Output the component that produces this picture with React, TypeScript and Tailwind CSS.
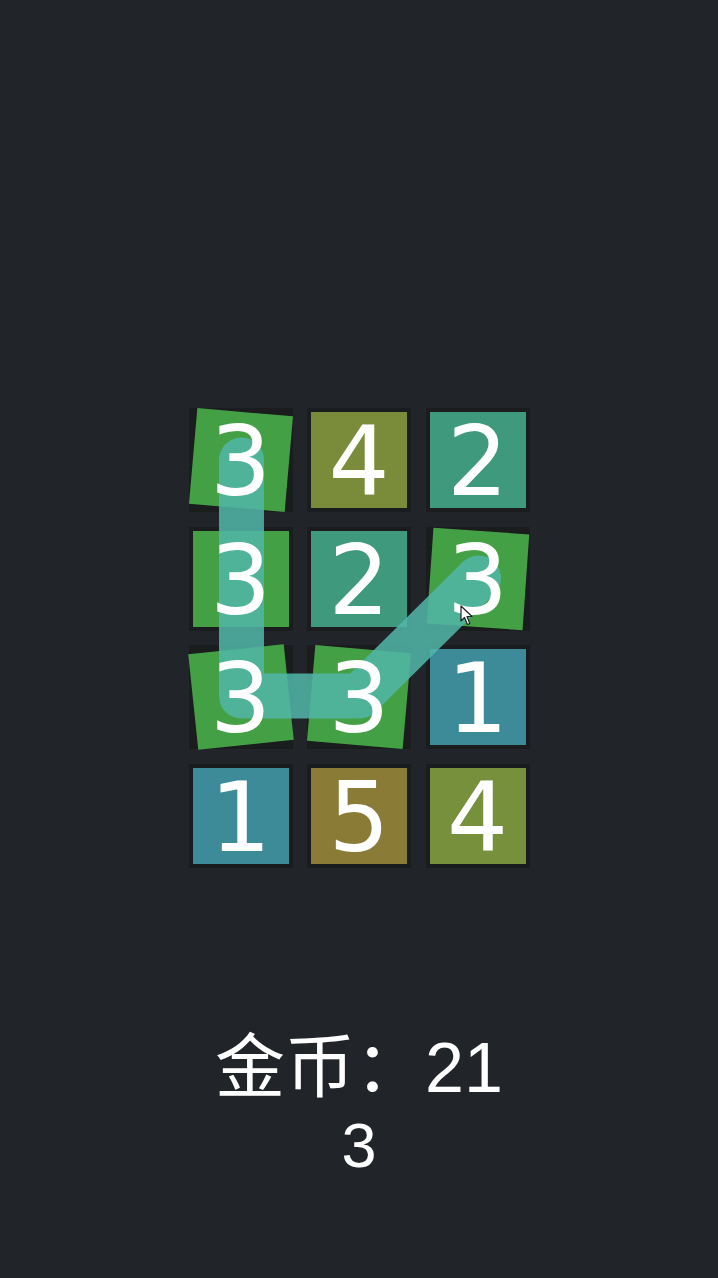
import React from 'react';

type Cell = { n: number; bg: string; rot: string };

// board state: selected tiles are green and slightly tilted
const cells: Cell[] = [
    { n: 3, bg: 'bg-[#44a044]', rot: 'rotate-[5deg]' },
    { n: 4, bg: 'bg-[#7a8b3a]', rot: '' },
    { n: 2, bg: 'bg-[#3f9a7d]', rot: '' },
    { n: 3, bg: 'bg-[#44a044]', rot: '' },
    { n: 2, bg: 'bg-[#3f9a7d]', rot: '' },
    { n: 3, bg: 'bg-[#44a044]', rot: 'rotate-[4deg]' },
    { n: 3, bg: 'bg-[#44a044]', rot: '-rotate-[6deg]' },
    { n: 3, bg: 'bg-[#44a044]', rot: 'rotate-[5deg]' },
    { n: 1, bg: 'bg-[#3d8b99]', rot: '' },
    { n: 1, bg: 'bg-[#3d8b99]', rot: '' },
    { n: 5, bg: 'bg-[#8a7c37]', rot: '' },
    { n: 4, bg: 'bg-[#77903c]', rot: '' },
];

function Cursor() {
    return (
        <svg className="absolute left-[271px] top-[197px] w-[13px] h-[21px]" viewBox="0 0 13 21">
            <path
                d="M1 1 L1 16 L4.5 12.5 L7.5 19.5 L9.8 18.5 L7 11.5 L12 11.5 Z"
                fill="#ffffff"
                stroke="#222"
                strokeWidth="1.2"
                strokeLinejoin="round"
            />
        </svg>
    );
}

export default function App() {
    return (
        <div className="w-full h-[1278px] bg-[#212428] flex flex-col items-center pt-[408px] overflow-hidden">
            {/* Board */}
            <div className="relative">
                <div className="grid grid-cols-3 gap-x-[14.5px] gap-y-[14.7px]">
                    {cells.map((c, i) => (
                        <div key={i} className="p-1 bg-[#1a1c1e]">
                            <div className={`w-24 h-24 ${c.bg} ${c.rot}`} />
                        </div>
                    ))}
                </div>

                {/* drag path */}
                <svg className="absolute inset-0 w-full h-full pointer-events-none" viewBox="0 0 340 460">
                    <path
                        d="M52 52 L52 288 L170 288 L289 170"
                        fill="none"
                        stroke="rgba(82,182,168,0.86)"
                        strokeWidth="45"
                        strokeLinecap="round"
                        strokeLinejoin="round"
                    />
                </svg>

                {/* numbers sit above the path */}
                <div className="absolute inset-0 grid grid-cols-3 gap-x-[14.5px] gap-y-[14.7px]">
                    {cells.map((c, i) => (
                        <div key={i} className="p-1">
                            <div className="w-24 h-24 flex items-center justify-center pt-1 text-white text-[96px] leading-none font-['DejaVu_Sans',sans-serif]">
                                {c.n}
                            </div>
                        </div>
                    ))}
                </div>

                <Cursor />
            </div>

            {/* Coins */}
            <div className="mt-[158px] flex flex-col items-center text-white font-['Liberation_Sans','Noto_Sans_CJK_SC',sans-serif]">
                <div className="text-[70px] leading-[84px]">金币：21</div>
                <div className="text-[63px] leading-[70px]">3</div>
            </div>
        </div>
    );
}
